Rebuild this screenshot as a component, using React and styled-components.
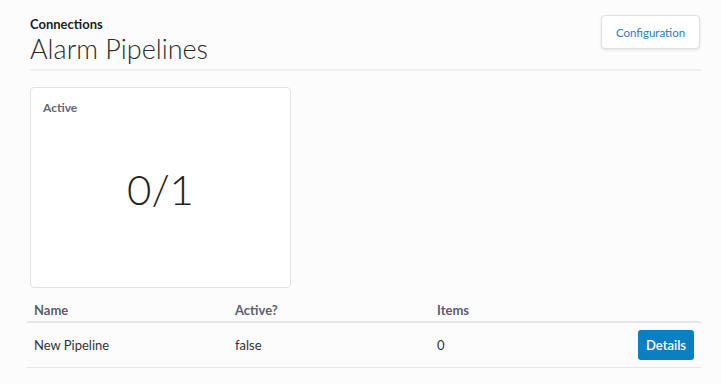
import React from 'react'
import styled, { createGlobalStyle } from 'styled-components'

const Global = createGlobalStyle`
  html, body {
    margin: 0;
    background: #fcfcfc;
    font-family: Lato, "Noto Sans", sans-serif;
    color: #222;
  }
`

const Page = styled.div`
  width: 671px;
  padding: 15px 20px 0 30px;
`

const Header = styled.div`
  display: flex;
  justify-content: space-between;
  align-items: flex-start;
  padding-bottom: 3px;
  border-bottom: 2px solid #eef0f3;
`

const Crumb = styled.div`
  font-size: 13px;
  font-weight: 700;
  margin-top: 1px;
  color: #1d1d1d;
`

const Title = styled.h1`
  margin: 0;
  font-size: 27px;
  font-weight: 300;
  color: #2b2b2b;
  line-height: 34px;
`

const ConfigButton = styled.button`
  font-family: inherit;
  font-size: 11.5px;
  color: #2a7bc4;
  background: #fff;
  border: 1px solid #dde2e8;
  border-radius: 4px;
  box-shadow: 0 1px 3px rgba(0, 0, 0, 0.1);
  height: 34px;
  width: 99px;
  margin-right: 1px;
  padding: 0;
`

const Card = styled.div`
  margin-top: 16px;
  width: 261px;
  height: 201px;
  background: #fff;
  border: 1px solid #dfe3e8;
  border-radius: 4px;
  box-sizing: border-box;
  padding: 12px 12px;
  display: flex;
  flex-direction: column;
`

const CardLabel = styled.div`
  font-size: 12px;
  font-weight: 700;
  color: #5f6575;
`

const CardValue = styled.div`
  flex: 1;
  display: flex;
  align-items: center;
  justify-content: center;
  font-size: 42px;
  font-weight: 300;
  color: #222;
  padding-bottom: 12px;
`

const Table = styled.table`
  margin: 10px 0 0 -3px;
  width: 674px;
  border-collapse: collapse;
  table-layout: fixed;
  font-size: 13px;
`

const Th = styled.th`
  text-align: left;
  font-weight: 700;
  color: #5a5f6e;
  padding: 4px 7px 3px;
  width: ${p => p.w || 'auto'};
  border-bottom: 2px solid #e3e6ea;
`

const Td = styled.td`
  padding: 5px 7px;
  color: #333;
  height: 34px;
  text-align: ${p => (p.right ? 'right' : 'left')};
  border-bottom: 1px solid #e3e6ea;
`

const DetailsButton = styled.button`
  font-family: inherit;
  font-size: 13px;
  font-weight: 600;
  color: #fff;
  background: #0a7fc1;
  border: none;
  border-radius: 3px;
  width: 56px;
  height: 30px;
  padding: 0;
`

const pipelines = [{ name: 'New Pipeline', active: 'false', items: 0 }]

export default function App() {
  return (
    <>
      <Global />
      <Page>
        <Header>
          <div>
            <Crumb>Connections</Crumb>
            <Title>Alarm Pipelines</Title>
          </div>
          <ConfigButton>Configuration</ConfigButton>
        </Header>
        <Card>
          <CardLabel>Active</CardLabel>
          <CardValue>0/1</CardValue>
        </Card>
        <Table>
          <thead>
            <tr>
              <Th w="187px">Name</Th>
              <Th w="188px">Active?</Th>
              <Th>Items</Th>
              <Th />
            </tr>
          </thead>
          <tbody>
            {pipelines.map(p => (
              <tr key={p.name}>
                <Td>{p.name}</Td>
                <Td>{p.active}</Td>
                <Td>{p.items}</Td>
                <Td right>
                  <DetailsButton>Details</DetailsButton>
                </Td>
              </tr>
            ))}
          </tbody>
        </Table>
      </Page>
    </>
  )
}
